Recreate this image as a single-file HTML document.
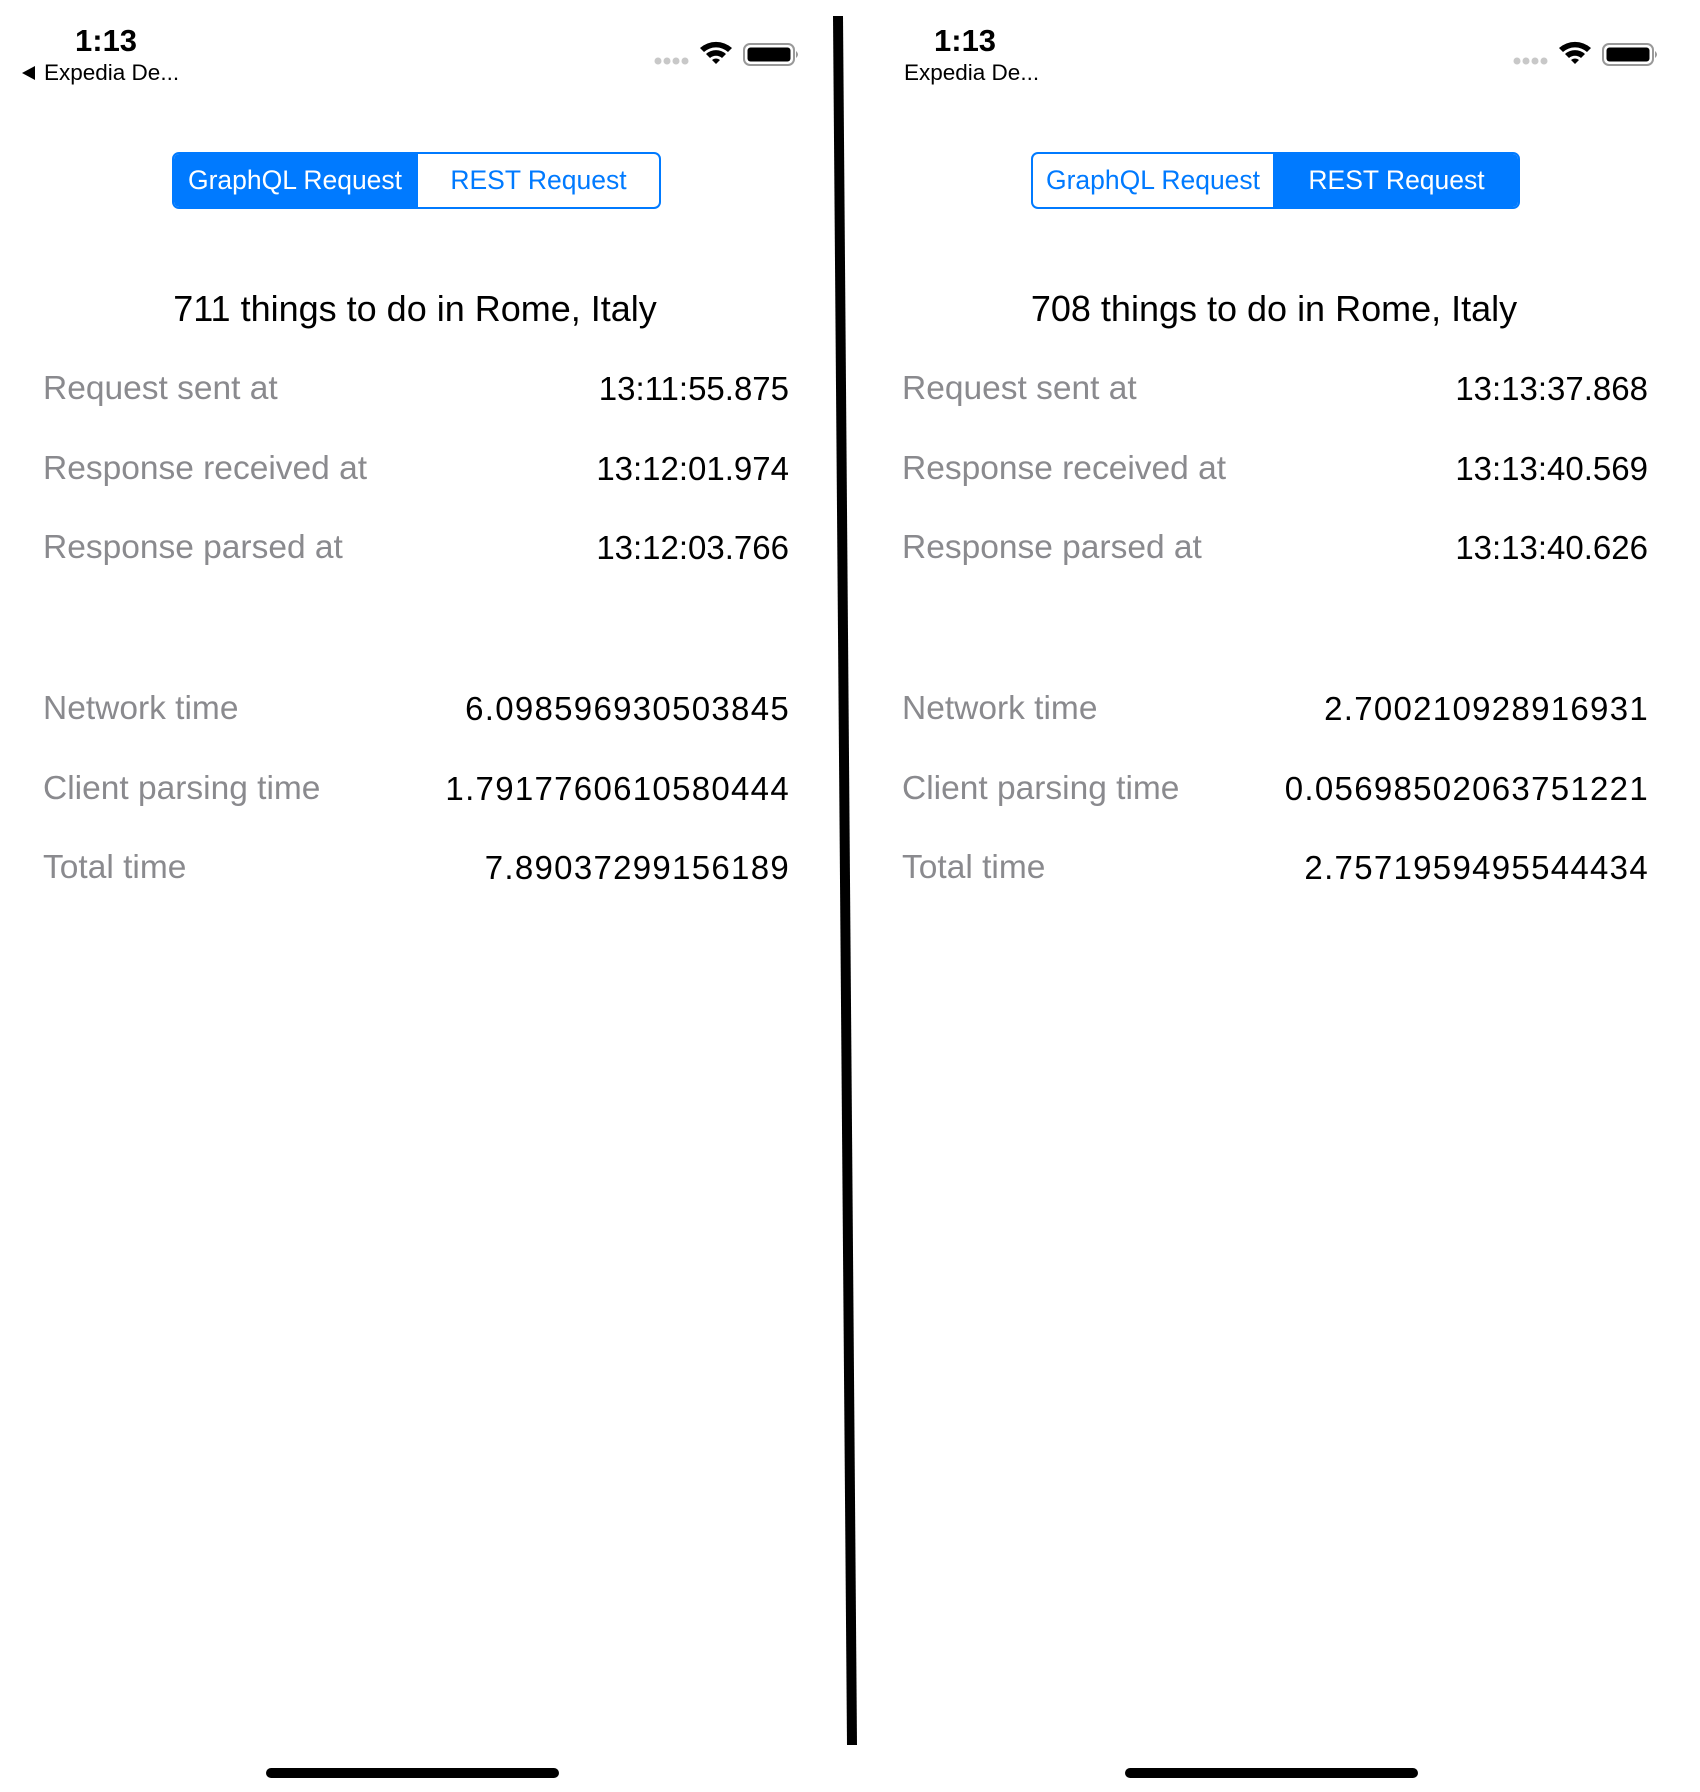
<!DOCTYPE html>
<html><head><meta charset="utf-8"><style>
*{margin:0;padding:0;box-sizing:border-box}
body{width:1700px;height:1792px;background:#fff;position:relative;overflow:hidden;font-family:"Liberation Sans",sans-serif}
.p{position:absolute;top:0;width:850px;height:1792px}
.t{position:absolute;white-space:nowrap;line-height:1}
.time{left:75px;top:25px;font-size:31px;font-weight:bold;color:#000}
.back{left:44px;top:62px;font-size:22.5px;color:#000}
.seg{position:absolute;left:172px;top:152px;width:489px;height:57px;border:2px solid #007aff;border-radius:7px;overflow:hidden;display:flex}
.seg div{height:100%;display:flex;align-items:center;justify-content:center;font-size:26.5px;color:#007aff}
.seg .a{background:#007aff;color:#fff}
.title{left:0;width:830px;text-align:center;top:291px;font-size:36px;color:#000}
.l{left:43px;font-size:33.5px;color:#8a8a8e}
.v{right:61px;font-size:33px;color:#000;text-align:right}
.n{letter-spacing:1.3px;right:60px}
.home{position:absolute;top:1768px;left:266px;width:293px;height:10px;border-radius:5px;background:#000}
</style></head><body>

<div class="p" style="left:0">
 <div class="t time">1:13</div>
 <svg style="position:absolute;left:20px;top:65px" width="16" height="16"><polygon points="15,1 15,15 2,8" fill="#000"/></svg>
 <div class="t back">Expedia De...</div>
 <svg style="position:absolute;left:650px;top:40px" width="155" height="28">
  <circle cx="8" cy="21" r="3.5" fill="#c8c8c8"/><circle cx="17" cy="21" r="3.5" fill="#c8c8c8"/><circle cx="26" cy="21" r="3.5" fill="#c8c8c8"/><circle cx="35" cy="21" r="3.5" fill="#c8c8c8"/>
  <path d="M50 8 A24 24 0 0 1 82 8 L78 12 A18 18 0 0 0 54 12 Z" fill="#000"/>
  <path d="M56 14 A15 15 0 0 1 76 14 L72 18 A9 9 0 0 0 60 18 Z" fill="#000"/>
  <path d="M62 20 L66 24 L70 20 A6 6 0 0 0 62 20 Z" fill="#000"/>
  <rect x="94" y="4" width="50" height="21" rx="6" fill="none" stroke="#999" stroke-width="2"/>
  <rect x="97.5" y="7.5" width="43" height="14" rx="3" fill="#000"/>
  <path d="M146 11 Q150 14.5 146 18 Z" fill="#999"/>
 </svg>
 <div class="seg"><div class="a" style="width:244px">GraphQL Request</div><div style="width:245px;border-left:2px solid #007aff">REST Request</div></div>
 <div class="t title">711 things to do in Rome, Italy</div>
 <div class="t l" style="top:372px">Request sent at</div><div class="t v" style="top:372px">13:11:55.875</div>
 <div class="t l" style="top:452px">Response received at</div><div class="t v" style="top:452px">13:12:01.974</div>
 <div class="t l" style="top:531px">Response parsed at</div><div class="t v" style="top:531px">13:12:03.766</div>
 <div class="t l" style="top:692px">Network time</div><div class="t v n" style="top:692px">6.098596930503845</div>
 <div class="t l" style="top:772px">Client parsing time</div><div class="t v n" style="top:772px">1.7917760610580444</div>
 <div class="t l" style="top:851px">Total time</div><div class="t v n" style="top:851px">7.89037299156189</div>
 <div class="home"></div>
</div>

<div class="p" style="left:859px">
 <div class="t time">1:13</div>
 <div class="t back" style="left:45px">Expedia De...</div>
 <svg style="position:absolute;left:650px;top:40px" width="155" height="28">
  <circle cx="8" cy="21" r="3.5" fill="#c8c8c8"/><circle cx="17" cy="21" r="3.5" fill="#c8c8c8"/><circle cx="26" cy="21" r="3.5" fill="#c8c8c8"/><circle cx="35" cy="21" r="3.5" fill="#c8c8c8"/>
  <path d="M50 8 A24 24 0 0 1 82 8 L78 12 A18 18 0 0 0 54 12 Z" fill="#000"/>
  <path d="M56 14 A15 15 0 0 1 76 14 L72 18 A9 9 0 0 0 60 18 Z" fill="#000"/>
  <path d="M62 20 L66 24 L70 20 A6 6 0 0 0 62 20 Z" fill="#000"/>
  <rect x="94" y="4" width="50" height="21" rx="6" fill="none" stroke="#999" stroke-width="2"/>
  <rect x="97.5" y="7.5" width="43" height="14" rx="3" fill="#000"/>
  <path d="M146 11 Q150 14.5 146 18 Z" fill="#999"/>
 </svg>
 <div class="seg"><div style="width:244px;border-right:2px solid #007aff">GraphQL Request</div><div class="a" style="width:245px">REST Request</div></div>
 <div class="t title">708 things to do in Rome, Italy</div>
 <div class="t l" style="top:372px">Request sent at</div><div class="t v" style="top:372px">13:13:37.868</div>
 <div class="t l" style="top:452px">Response received at</div><div class="t v" style="top:452px">13:13:40.569</div>
 <div class="t l" style="top:531px">Response parsed at</div><div class="t v" style="top:531px">13:13:40.626</div>
 <div class="t l" style="top:692px">Network time</div><div class="t v n" style="top:692px">2.700210928916931</div>
 <div class="t l" style="top:772px">Client parsing time</div><div class="t v n" style="top:772px">0.05698502063751221</div>
 <div class="t l" style="top:851px">Total time</div><div class="t v n" style="top:851px">2.7571959495544434</div>
 <div class="home"></div>
</div>

<svg style="position:absolute;left:0;top:0" width="1700" height="1792"><polygon points="833,16 843,16 857,1745 847,1745" fill="#000"/></svg>
</body></html>
